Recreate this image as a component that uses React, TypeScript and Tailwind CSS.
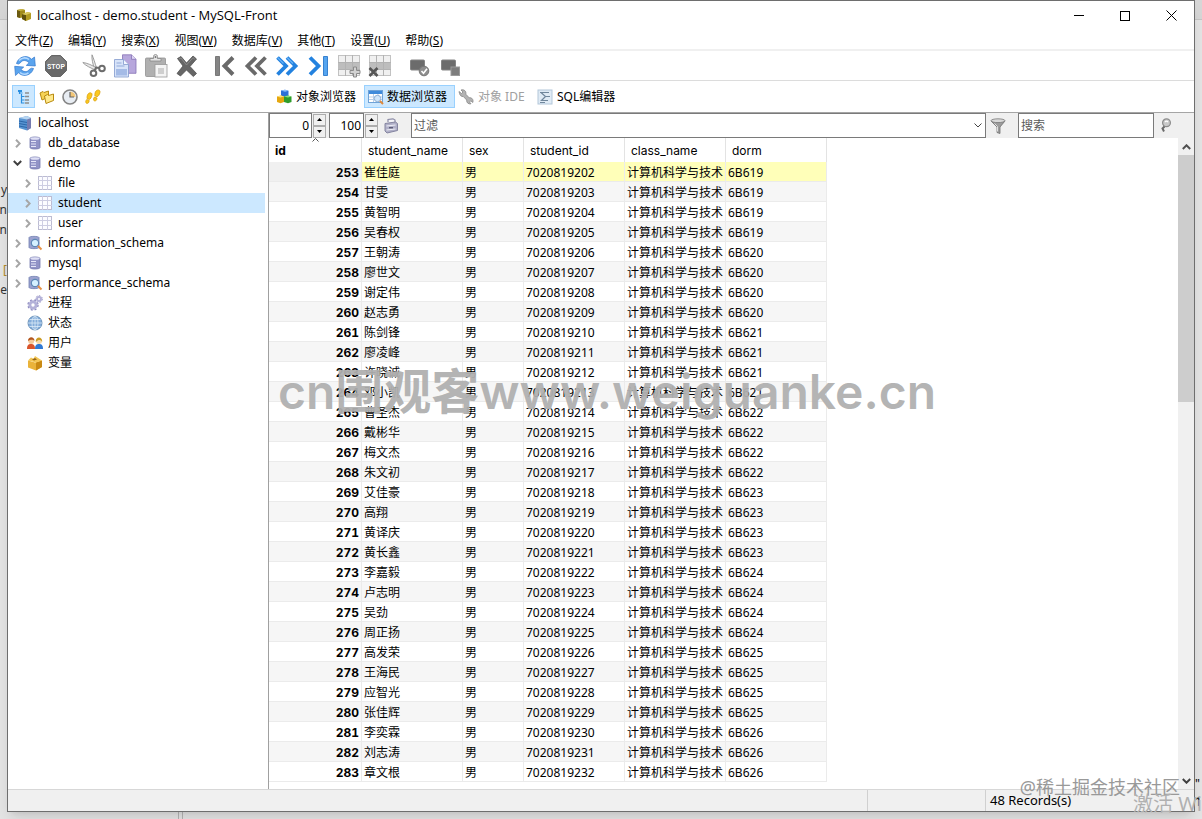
import React, { useState } from 'react';

const MENUS = [
    ['文件', 'Z'],
    ['编辑', 'Y'],
    ['搜索', 'X'],
    ['视图', 'W'],
    ['数据库', 'V'],
    ['其他', 'T'],
    ['设置', 'U'],
    ['帮助', 'S'],
];

const NAMES = [
    '崔佳庭', '甘雯', '黄智明', '吴春权', '王朝涛', '廖世文', '谢定伟', '赵志勇',
    '陈剑锋', '廖凌峰', '许晓诚', '邓小凯', '曹圣杰', '戴彬华', '梅文杰', '朱文初',
    '艾佳豪', '高翔', '黄译庆', '黄长鑫', '李嘉毅', '卢志明', '吴劲', '周正扬',
    '高发荣', '王海民', '应智光', '张佳辉', '李奕霖', '刘志涛', '章文根',
];

const STUDENTS = NAMES.map((name, i) => ({
    id: 253 + i,
    name,
    sex: '男',
    studentId: String(7020819202 + i),
    className: '计算机科学与技术',
    dorm: `6B${619 + Math.floor(i / 4)}`,
}));

type IconProps = { className?: string };

/* ---------- title bar ---------- */

const AppIcon = () => (
    <svg viewBox="0 0 16 16" className="w-4 h-4">
        <path d="M1 2l5-1 3 1v7l-5 1-3-1z" fill="#a08a1c" />
        <path d="M1 2l3 1v7l-3-1z" fill="#6b5a10" />
        <path d="M1 2l5-1 3 1-5 1z" fill="#c9b545" />
        <path d="M6 6l6-2 3 1v6l-5 2-4-2z" fill="#b39c22" />
        <path d="M6 6l4 1v6l-4-2z" fill="#5f500d" />
        <path d="M6 6l6-2 3 1-5 2z" fill="#d9c860" />
    </svg>
);

/* ---------- main toolbar ---------- */

const RefreshIcon = () => (
    <svg viewBox="0 0 24 24" className="w-6 h-6">
        <g fill="#5aa4ee" stroke="#2f76cc" strokeWidth=".7" strokeLinejoin="round">
            <path d="M3.500 9.500C5 4.500 10 1.500 15 3c1.500.5 2.600 1.200 3.500 2.200L21.500 3l.8 9-9-.6 2.800-2.700C13 6 9.500 5.600 7.500 8.700L5.500 10z" />
            <path d="M20.500 14.500C19 19.500 14 22.500 9 21c-1.500-.5-2.600-1.200-3.500-2.200L2.500 21.500l-.8-9.200 9 .8-2.800 2.500c3 2.600 6.600 2.800 8.600-.3l2-1.100z" />
        </g>
        <path d="M6 6.500C8.500 3.500 13 3 16 5.500" fill="none" stroke="#b5daff" strokeWidth="1.600" />
        <path d="M7 18.500c2.500 2 6 2 8.500.3" fill="none" stroke="#b5daff" strokeWidth="1.600" />
    </svg>
);

const StopIcon = () => (
    <svg viewBox="0 0 24 24" className="w-6 h-6">
        <path d="M7.500 1.500h9l6 6v9l-6 6h-9l-6-6v-9z" fill="#686868" stroke="#666" />
        <path d="M7.700 2.200h8.600l5.500 5.800v3H2.200V8z" fill="#7d7d7d" />
        <text x="12" y="14.500" textAnchor="middle" fontFamily="Roboto, sans-serif" fontWeight="700" fontSize="7" fill="#fff">STOP</text>
    </svg>
);

const CutIcon = () => (
    <svg viewBox="0 0 24 24" className="w-6 h-6">
        <path d="M10 .8c1.500 3 3 8.500 4.500 13l-2.300.7C11 10 9.500 5 10 .8z" fill="#e9e9e9" stroke="#888" strokeWidth=".8" />
        <path d="M.8 8.500c4.200.4 9.500 2.800 14.200 5.700l-1.200 2C9 14 3.500 11.800.8 8.500z" fill="#e9e9e9" stroke="#888" strokeWidth=".8" />
        <circle cx="11.500" cy="19.200" r="2.800" fill="none" stroke="#6c6c6c" strokeWidth="2" />
        <circle cx="20" cy="14.500" r="2.800" fill="none" stroke="#6c6c6c" strokeWidth="2" />
        <path d="M12.500 16.500l1.500-3 3.500.5" fill="none" stroke="#6c6c6c" strokeWidth="1.800" />
    </svg>
);

const CopyIcon = () => (
    <svg viewBox="0 0 24 24" className="w-6 h-6">
        <path d="M9.500.8h9l4.500 4.500v14H9.500z" fill="#b7a7dc" stroke="#8672b5" strokeWidth=".8" />
        <path d="M18.500.8v4.500H23" fill="#ded5f3" stroke="#8672b5" strokeWidth=".8" />
        <path d="M1.500 5.500h9l5 5V23h-14z" fill="#d8e4f9" stroke="#8199cb" strokeWidth=".8" />
        <path d="M3 15h11v6.500H3z" fill="#8fa9de" opacity=".7" />
        <path d="M10.500 5.500v5h5" fill="#f3f7ff" stroke="#8199cb" strokeWidth=".8" />
        <path d="M3.500 9h5M3.500 12h8" stroke="#91a9d9" strokeWidth="1.200" />
    </svg>
);

const PasteIcon = () => (
    <svg viewBox="0 0 24 24" className="w-6 h-6">
        <rect x="1.500" y="4" width="20" height="18.500" rx="1" fill="#b0b0b0" stroke="#929292" strokeWidth=".8" />
        <path d="M6 7V4.500h3.500V2.500a2 2 0 0 1 4 0v2H17V7z" fill="#e4e4e4" stroke="#888" strokeWidth=".8" />
        <circle cx="11.500" cy="3" r="1" fill="#777" />
        <rect x="11" y="10.500" width="12" height="12.500" fill="#f4f4f4" stroke="#999" strokeWidth=".8" />
        <path d="M14 15h6M14 17h6M14 19h6" stroke="#aaa" />
    </svg>
);

const DeleteIcon = () => (
    <svg viewBox="0 0 24 24" className="w-6 h-6">
        <path d="M2.500 4.500L6 2.500l5.500 6.500L18 2l3.500 3-6.500 7.500 6.500 7-3.200 3-6.800-6.500L5.500 22l-3.500-2.500 6-7.500z" fill="#666" stroke="#505050" strokeWidth=".8" strokeLinejoin="round" />
        <path d="M4 5l2-1 5.500 7L18 3.700l1.800 1.500" fill="none" stroke="#8b8b8b" />
    </svg>
);

const FirstIcon = () => (
    <svg viewBox="0 0 24 24" className="w-6 h-6">
        <path d="M2.500 2.500h4v19h-4z" fill="#858585" stroke="#666" strokeWidth=".8" />
        <path d="M20 3.500L11.500 12l8.500 8.500" fill="none" stroke="#696969" strokeWidth="4" />
    </svg>
);

const PrevIcon = () => (
    <svg viewBox="0 0 24 24" className="w-6 h-6">
        <path d="M12 3.500L3.500 12l8.500 8.500M21.500 3.500L13 12l8.500 8.500" fill="none" stroke="#6a6a6a" strokeWidth="3.800" />
    </svg>
);

const NextIcon = () => (
    <svg viewBox="0 0 24 24" className="w-6 h-6">
        <path d="M2.500 3.500L11 12l-8.500 8.500M12 3.500l8.500 8.500-8.500 8.500" fill="none" stroke="#2382df" strokeWidth="3.800" />
        <path d="M2.500 3.500l6 6M12 3.500l6 6" stroke="#68b1f5" strokeWidth="1.200" />
    </svg>
);

const LastIcon = () => (
    <svg viewBox="0 0 24 24" className="w-6 h-6">
        <path d="M17.500 2.500h4v19h-4z" fill="#55a5f0" stroke="#1b6cc4" strokeWidth=".8" />
        <path d="M4 3.500l8.500 8.500L4 20.500" fill="none" stroke="#2382df" strokeWidth="3.800" />
    </svg>
);

const GridBase = () => (
    <>
        <rect x="1.500" y="1.500" width="21" height="20" fill="#f0f0f0" stroke="#c2c2c2" />
        <rect x="1" y="8" width="22" height="7" fill="#bdbdbd" />
        <path d="M8.500 1v21M15.500 1v21M1 8.500h22M1 15.500h22" stroke="#b2b2b2" />
    </>
);

const RowAddIcon = () => (
    <svg viewBox="0 0 24 24" className="w-6 h-6">
        <GridBase />
        <path d="M16.500 13h3v3.500H23v3h-3.500V23h-3v-3.500H13v-3h3.500z" fill="#d2d2d2" stroke="#8a8a8a" />
    </svg>
);

const RowDeleteIcon = () => (
    <svg viewBox="0 0 24 24" className="w-6 h-6">
        <GridBase />
        <path d="M1.500 14l8 8M9.500 14l-8 8" stroke="#555" strokeWidth="2.600" />
    </svg>
);

const CommitIcon = () => (
    <svg viewBox="0 0 24 24" className="w-6 h-6">
        <rect x="4.500" y="6" width="14" height="10" rx="1" fill="#6c6c6c" stroke="#858585" />
        <circle cx="18" cy="17" r="4.800" fill="#8e8e8e" stroke="#777" />
        <path d="M15.500 17l2 2.200 3.500-4.500" fill="none" stroke="#fff" strokeWidth="1.600" />
    </svg>
);

const RollbackIcon = () => (
    <svg viewBox="0 0 24 24" className="w-6 h-6">
        <rect x="4.500" y="6" width="14" height="10" rx="1" fill="#6c6c6c" stroke="#858585" />
        <rect x="14" y="13" width="8.500" height="8.500" fill="#7d7d7d" stroke="#9a9a9a" />
    </svg>
);

/* ---------- side bar switcher and tabs ---------- */

const NavigatorIcon = () => (
    <svg viewBox="0 0 16 16" className="w-4 h-4">
        <path d="M3.500 1v4M3.500 4h3M5.500 5v9.500M5.500 7.500h3M5.500 11h3M5.500 14h3" fill="none" stroke="#2b8fe0" strokeWidth="1.200" />
        <path d="M2 2h4" stroke="#2b8fe0" strokeWidth="2" />
        <path d="M9 4h4M9 7.500h4M9 11h4M9 14h4" stroke="#8d8d8d" strokeWidth="1.500" />
    </svg>
);

const BookmarksIcon = () => (
    <svg viewBox="0 0 16 16" className="w-4 h-4">
        <path d="M1 4l3-1.500 1 1L9.500 2v6L3 11z" fill="#f6d254" stroke="#b98b10" />
        <path d="M5.500 7l3-1.500 1 1L14.500 5v6.500L7 14.500z" fill="#ffe98c" stroke="#b98b10" />
    </svg>
);

const HistoryIcon = () => (
    <svg viewBox="0 0 16 16" className="w-4 h-4">
        <circle cx="8" cy="8" r="7" fill="#e8edf3" stroke="#858585" strokeWidth="1.600" />
        <path d="M8 8V2.500A5.500 5.500 0 0 1 13.500 8z" fill="#f3c778" />
        <path d="M8 3v5h4" fill="none" stroke="#666" strokeWidth="1.200" />
    </svg>
);

const FootstepsIcon = () => (
    <svg viewBox="0 0 16 16" className="w-4 h-4">
        <g fill="#fbc81e" stroke="#d69b0b" strokeWidth=".7">
            <path d="M3 5c1.500-2 4.500-1.500 4 1C6.500 8.500 5.500 10 4.300 10.500L2 9.500C2 7.500 2.200 6.300 3 5z" />
            <path d="M1.700 10.500l2.500 1c0 2-1.200 3.200-2.500 2.900S.3 12 1.700 10.500z" />
            <path d="M11 2c1.500-1.700 4.500-1.200 4 1.300-.5 2.500-1.700 4-2.900 4.500l-2.300-1C9.800 4.800 10 3.300 11 2z" />
            <path d="M9.500 8l2.500 1c0 2-1.200 3.200-2.500 2.900S8.100 9.500 9.500 8z" />
        </g>
    </svg>
);

const ObjectsIcon = () => (
    <svg viewBox="0 0 16 16" className="w-4 h-4">
        <path d="M5 1.500L9 .8l3.500 1v5L9 8 5 6.800z" fill="#2d70d8" />
        <path d="M5 1.500L9 .8l3.500 1L9 2.700z" fill="#8fc0ff" />
        <path d="M1 7.500l4-1 3 1V13l-3.500 1.200L1 13z" fill="#e5a70f" />
        <path d="M1 7.500l4-1 3 1-3.500 1z" fill="#ffe27a" />
        <path d="M8 7.500l4-1 3.500 1V13L12 14.300 8 13z" fill="#2f9d2b" />
        <path d="M8 7.500l4-1 3.500 1-3.500 1z" fill="#8fe07f" />
    </svg>
);

const BrowserIcon = () => (
    <svg viewBox="0 0 16 16" className="w-4 h-4">
        <rect x=".5" y="1.500" width="14" height="12" fill="#fff" stroke="#6fa3d8" />
        <path d="M1 2h13v3H1z" fill="#3f8bdb" />
        <path d="M5.500 5v8M10 5v8M1 8h13M1 10.500h13" stroke="#b9cfe8" />
        <circle cx="9.500" cy="9.500" r="3.200" fill="#cfe6fb" stroke="#8fb0d4" />
        <path d="M12 12l3 3" stroke="#e08a3c" strokeWidth="2" />
    </svg>
);

const WrenchIcon = () => (
    <svg viewBox="0 0 16 16" className="w-4 h-4">
        <path d="M1.500 4.500L1 2.500l2.500 2 1.500-1.500-2-2c3-.8 5.500 1 4.800 4.200l3.400 3.600c2.800-.5 4.500 2 3.600 4.700l-2-1.700-1.300 1.300 1.500 1.700c-2.700.6-4.700-1.200-4.300-3.800L5.300 7.500C3.500 7.800 2 6.500 1.500 4.500z" fill="#b3b3b3" stroke="#868686" strokeWidth=".8" />
    </svg>
);

const SqlIcon = () => (
    <svg viewBox="0 0 16 16" className="w-4 h-4">
        <rect x="1" y="1" width="14" height="14" fill="#e0ebf5" stroke="#b3c7da" />
        <path d="M3 3.500h9M4 3.500L8.500 7.500 4.500 11.500H11M8.500 7.500H13M3 13.500h5" fill="none" stroke="#71879c" strokeWidth="1.200" />
    </svg>
);

/* ---------- navigator tree ---------- */

const ServerIcon = () => (
    <svg viewBox="0 0 16 16" className="w-4 h-4">
        <path d="M2 3l8-2 4 2v10l-4 2.500L2 13z" fill="#5794d2" />
        <path d="M10 4l4-1v10l-4 2.500z" fill="#747bb0" />
        <path d="M2 3l8-2 4 2-4 1.500z" fill="#b8d5f1" />
        <path d="M2 6l8 1.500M2 8.500l8 1.500M2 11l8 1.500" stroke="#2b66a8" />
    </svg>
);

const DatabaseIcon = () => (
    <svg viewBox="0 0 16 16" className="w-4 h-4">
        <path d="M3 3.500C3 1.500 13 1.500 13 3.500v9c0 2-10 2-10 0z" fill="#9193c6" stroke="#7478ad" strokeWidth=".8" />
        <ellipse cx="8" cy="3.500" rx="4.600" ry="1.300" fill="#dfe0f5" />
        <path d="M4 6.500h5M4 9h5M4 11.500h5" stroke="#e6e7f8" strokeWidth="1.200" />
    </svg>
);

const SchemaIcon = () => (
    <svg viewBox="0 0 16 16" className="w-4 h-4">
        <path d="M2 2.500C2 1 12 1 12 2.500v10c0 1.500-10 1.500-10 0z" fill="#9ba2cf" stroke="#6f7db0" strokeWidth=".8" />
        <circle cx="8" cy="8" r="3.700" fill="#d4f0ff" stroke="#5d87b5" strokeWidth="1.200" />
        <path d="M11 11l3.500 3.500" stroke="#e79346" strokeWidth="2" />
    </svg>
);

const TableIcon = () => (
    <svg viewBox="0 0 16 16" className="w-4 h-4">
        <rect x="1.500" y="1.500" width="13" height="13" fill="#fcfcff" stroke="#bcbcd2" />
        <path d="M5.500 1v14M10.500 1v14M1 5.500h14M1 10.500h14" stroke="#cdcde2" />
    </svg>
);

const ProcessIcon = () => (
    <svg viewBox="0 0 16 16" className="w-4 h-4">
        <circle cx="6" cy="10" r="5" fill="none" stroke="#8d8abf" strokeWidth="1.400" strokeDasharray="2 2" />
        <circle cx="6" cy="10" r="3.200" fill="none" stroke="#b3b1d8" strokeWidth="3" />
        <circle cx="12" cy="4" r="3.300" fill="none" stroke="#8d8abf" strokeDasharray="1.500 1.500" />
        <circle cx="12" cy="4" r="2" fill="none" stroke="#b3b1d8" strokeWidth="2" />
    </svg>
);

const GlobeIcon = () => (
    <svg viewBox="0 0 16 16" className="w-4 h-4">
        <circle cx="8" cy="8" r="7" fill="#84addA" stroke="#5581ad" strokeWidth=".8" />
        <ellipse cx="8" cy="8" rx="3" ry="7" fill="none" stroke="#dcebf8" strokeWidth=".8" />
        <path d="M1 8h14M2.500 4.500h11M2.500 11.500h11M8 1v14" stroke="#dcebf8" strokeWidth=".8" />
    </svg>
);

const UsersIcon = () => (
    <svg viewBox="0 0 16 16" className="w-4 h-4">
        <path d="M0 14c0-4 1.500-5 4-5s4 1 4 5z" fill="#d9542b" />
        <circle cx="4.200" cy="6" r="3" fill="#f5c99a" />
        <path d="M1 6c0-5 6.500-5 6.500 0C6.500 4.500 4 4 1 6z" fill="#b3561e" />
        <path d="M8 14c0-4 1.500-5 4-5s4 1 4 5z" fill="#3079d3" />
        <circle cx="12" cy="6" r="3" fill="#f8d9a8" />
        <path d="M8.700 7c-.5-6 7-6 6.500 0-1-2.500-3.500-3-6.500 0z" fill="#c99a23" />
    </svg>
);

const VariableIcon = () => (
    <svg viewBox="0 0 16 16" className="w-4 h-4">
        <path d="M1 5.500L8 7.500l7-2V12l-6 3.500L1 12.500z" fill="#eab33a" />
        <path d="M9 7.500l6-2V12l-6 3.500z" fill="#c98a14" />
        <path d="M1 5.500L4 2.500l2.500 1.200L8 1l7 4.500-6 2z" fill="#f3c655" />
        <path d="M5 4.500l3-1.500 2 1.500-3 1z" fill="#946515" />
    </svg>
);

/* ---------- filter bar ---------- */

const LimitIcon = () => (
    <svg viewBox="0 0 16 16" className="w-4 h-4">
        <path d="M5 4V1.500l5-.7 2 1.200V5" fill="#f4f4f8" stroke="#8a8aa5" strokeWidth="1.200" />
        <path d="M2 5.500L12.500 4l2 1.500v7L4 15l-2-2z" fill="#b0b0c8" stroke="#8585a0" />
        <path d="M3.500 8l9-1M3.500 12l9-1" stroke="#eeeef6" strokeWidth="1.200" />
        <path d="M6 9.700h4" stroke="#5d5d78" strokeWidth="1.400" />
    </svg>
);

const FunnelIcon = () => (
    <svg viewBox="0 0 16 16" className="w-4 h-4">
        <path d="M1 3l6 6v5.500l3 1V9l5-6z" fill="#9c9c9c" stroke="#6e6e6e" strokeWidth=".8" />
        <ellipse cx="8" cy="2.700" rx="7" ry="1.900" fill="#d9d9d9" stroke="#777" strokeWidth=".8" />
        <path d="M4.500 5.500l3 3v5" fill="none" stroke="#e0e0e0" />
    </svg>
);

const FindIcon = () => (
    <svg viewBox="0 0 16 16" className="w-4 h-4">
        <circle cx="8.500" cy="4.800" r="3.900" fill="#c9c9c9" stroke="#8b8b8b" strokeWidth="1.200" />
        <path d="M6.500 8.500L4.500 10.500l1.500 3" fill="none" stroke="#6b6b6b" strokeWidth="2" />
        <path d="M7 4c1-1.200 2-1.200 3 0" fill="none" stroke="#fff" strokeWidth="1.200" />
    </svg>
);

const CHEVRONS = {
    right: { box: 'h-[9px] w-[6px]', view: '0 0 6 9', d: 'M1 .8l3.700 3.700L1 8.200', color: '#a6a6a6' },
    down: { box: 'h-[6px] w-[9px]', view: '0 0 9 6', d: 'M.8 1l3.700 3.700L8.200 1', color: '#404040' },
    up: { box: 'h-[6px] w-[9px]', view: '0 0 9 6', d: 'M.8 5l3.700-3.700L8.200 5', color: '#505050' },
};

const Chevron = ({ dir }: { dir: keyof typeof CHEVRONS }) => {
    const c = CHEVRONS[dir];
    return (
        <svg viewBox={c.view} className={c.box}>
            <path d={c.d} fill="none" stroke={c.color} strokeWidth="2" />
        </svg>
    );
};

const TOOL_GROUPS = [
    [
        { label: '刷新', icon: <RefreshIcon /> },
        { label: '停止', icon: <StopIcon /> },
    ],
    [
        { label: '剪切', icon: <CutIcon /> },
        { label: '复制', icon: <CopyIcon /> },
        { label: '粘贴', icon: <PasteIcon /> },
        { label: '删除', icon: <DeleteIcon /> },
    ],
    [
        { label: '第一条', icon: <FirstIcon /> },
        { label: '上一页', icon: <PrevIcon /> },
        { label: '下一页', icon: <NextIcon /> },
        { label: '最后一条', icon: <LastIcon /> },
        { label: '插入记录', icon: <RowAddIcon /> },
        { label: '删除记录', icon: <RowDeleteIcon /> },
    ],
    [
        { label: '提交', icon: <CommitIcon /> },
        { label: '回滚', icon: <RollbackIcon /> },
    ],
];

interface TreeNode {
    label: string;
    icon: React.ReactNode;
    level: number;
    state?: 'open' | 'closed';
}

const TREE: TreeNode[] = [
    { label: 'localhost', icon: <ServerIcon />, level: 0 },
    { label: 'db_database', icon: <DatabaseIcon />, level: 1, state: 'closed' },
    { label: 'demo', icon: <DatabaseIcon />, level: 1, state: 'open' },
    { label: 'file', icon: <TableIcon />, level: 2, state: 'closed' },
    { label: 'student', icon: <TableIcon />, level: 2, state: 'closed' },
    { label: 'user', icon: <TableIcon />, level: 2, state: 'closed' },
    { label: 'information_schema', icon: <SchemaIcon />, level: 1, state: 'closed' },
    { label: 'mysql', icon: <DatabaseIcon />, level: 1, state: 'closed' },
    { label: 'performance_schema', icon: <SchemaIcon />, level: 1, state: 'closed' },
    { label: '进程', icon: <ProcessIcon />, level: 1 },
    { label: '状态', icon: <GlobeIcon />, level: 1 },
    { label: '用户', icon: <UsersIcon />, level: 1 },
    { label: '变量', icon: <VariableIcon />, level: 1 },
];

const INDENT = ['pl-0', 'pl-1', 'pl-[14px]'];

const TitleBar = () => (
    <header className="flex h-[29px] shrink-0 items-center pl-2">
        <AppIcon />
        <h1 className="flex-1 pl-[5px] font-['Open_Sans',sans-serif] text-[13px]">localhost - demo.student - MySQL-Front</h1>
        <button aria-label="最小化" className="flex h-full w-[46px] items-center justify-center">
            <span className="h-px w-[10px] bg-black" />
        </button>
        <button aria-label="最大化" className="flex h-full w-[46px] items-center justify-center">
            <span className="h-[10px] w-[10px] border border-black" />
        </button>
        <button aria-label="关闭" className="flex h-full w-[46px] items-center justify-center">
            <svg viewBox="0 0 11 11" className="h-[11px] w-[11px]">
                <path d="M.5.5l10 10M10.500.5l-10 10" stroke="#000" />
            </svg>
        </button>
    </header>
);

const SpinBox = ({ label, initial, className }: { label: string; initial: number } & IconProps) => {
    const [value, setValue] = useState(initial);
    return (
        <div className="flex h-[25px] items-center gap-px">
            <input
                aria-label={label}
                value={value}
                onChange={e => setValue(Number(e.target.value) || 0)}
                className={`h-full border border-[#7a7a7a] bg-white pr-[2px] text-right text-[12px] outline-none ${className}`}
            />
            <div className="flex flex-col">
                <button aria-label={`${label} +`} onClick={() => setValue(value + 1)} className="flex h-[12px] w-[13px] items-center justify-center border border-[#adadad] bg-[#f0f0f0]">
                    <svg viewBox="0 0 5 3" className="h-[3px] w-[5px]"><path d="M0 3l2.500-3L5 3z" /></svg>
                </button>
                <button aria-label={`${label} -`} onClick={() => setValue(Math.max(0, value - 1))} className="flex h-[12px] w-[13px] items-center justify-center border border-[#adadad] bg-[#f0f0f0]">
                    <svg viewBox="0 0 5 3" className="h-[3px] w-[5px]"><path d="M0 0l2.500 3L5 0z" /></svg>
                </button>
            </div>
        </div>
    );
};

const FilterBar = () => (
    <div className="flex h-[25px] shrink-0 items-center bg-[#f0f0f0]">
        <SpinBox label="偏移" initial={0} className="w-[43px]" />
        <div className="w-[3px]" />
        <SpinBox label="限制" initial={100} className="w-[35px]" />
        <button aria-label="应用限制" className="ml-[5px] mr-3"><LimitIcon /></button>
        <div className="relative h-full flex-1">
            <select aria-label="过滤" className="block h-full w-full appearance-none border border-[#7a7a7a] bg-white px-[2px] text-[12px] leading-[22px] text-[#5a5a5a] outline-none">
                <option>过滤</option>
            </select>
            <svg viewBox="0 0 8 5" className="pointer-events-none absolute right-1 top-[10px] h-[5px] w-[8px]">
                <path d="M.5.5L4 4 7.500.5" fill="none" stroke="#444" />
            </svg>
        </div>
        <button aria-label="启用过滤" className="ml-1 mr-3"><FunnelIcon /></button>
        <input aria-label="搜索" placeholder="搜索" className="h-full w-[136px] border border-[#7a7a7a] bg-white px-[2px] text-[12px] outline-none placeholder:text-[#5a5a5a]" />
        <button aria-label="查找" className="ml-1 mr-5"><FindIcon /></button>
    </div>
);

const COLUMNS = [
    { label: 'id', className: 'w-[93px] font-bold' },
    { label: 'student_name', className: 'w-[101px] font-normal' },
    { label: 'sex', className: 'w-[61px] font-normal' },
    { label: 'student_id', className: 'w-[101px] font-normal' },
    { label: 'class_name', className: 'w-[101px] font-normal' },
    { label: 'dorm', className: 'w-[101px] font-normal' },
];

const DataGrid = () => (
    <table className="w-[558px] table-fixed border-separate border-spacing-0 text-left text-[12px]">
        <thead>
            <tr className="h-6">
                {COLUMNS.map(c => (
                    <th key={c.label} scope="col" className={`relative border-r border-[#e3e3e3] p-0 pl-[6px] pt-[2px] font-[Inter] leading-5 ${c.className}`}>
                        {c.label}
                        {c.label === 'id' && (
                            <svg viewBox="0 0 7 4" className="absolute left-[43px] top-0 h-[4px] w-[7px]">
                                <path d="M.5 3.500l3-3 3 3" fill="none" stroke="#555" />
                            </svg>
                        )}
                    </th>
                ))}
            </tr>
        </thead>
        <tbody>
            {STUDENTS.map((s, i) => {
                const cell = 'h-5 border-b border-r border-[#ebebeb] p-0 pt-[2px] pl-[2px] leading-[17px] whitespace-nowrap';
                const bg = i === 0 ? 'bg-[#ffffb9]' : i % 2 ? 'bg-[#f6f6f6]' : 'bg-white';
                return (
                    <tr key={s.id} className={bg}>
                        <td className={`${cell} pr-[2px] text-right font-[Inter] font-bold tabular-nums ${i === 0 ? 'bg-[#f0f0f0]' : ''}`}>{s.id}</td>
                        <td className={cell}>{s.name}</td>
                        <td className={cell}>{s.sex}</td>
                        <td className={cell}>{s.studentId}</td>
                        <td className={cell}>{s.className}</td>
                        <td className={cell}>{s.dorm}</td>
                    </tr>
                );
            })}
        </tbody>
    </table>
);

export default function App() {
    const [selected, setSelected] = useState('student');

    return (
        <div className="relative h-screen overflow-hidden bg-[#e4e4e4] px-[7px] pb-[7px] font-['Noto_Sans','Noto_Sans_CJK_SC',sans-serif] text-black">
            {/* window behind */}
            <div className="absolute inset-x-0 top-0 h-5 border-b border-[#c4c4c4] bg-[#d6d6d6]" />
            <div className="absolute bottom-0 left-[178px] h-[7px] w-[5px] border-x border-[#b4b4b4]" />
            <div className="absolute left-0 top-[180px] flex w-[7px] flex-col items-end overflow-hidden text-[12px] leading-5 text-[#333]">
                <span>y</span>
                <span>n</span>
                <span>n</span>
                <span />
                <span className="mt-5 text-[#b08a28]">[</span>
                <span>e</span>
            </div>
            <div className="absolute right-0 top-[775px] flex w-[7px] flex-col text-[12px] leading-[18px]">
                <span>"</span>
                <span>1</span>
            </div>

            <div className="relative flex h-full flex-col border border-[#6e6e6e] bg-white shadow-lg">
                <TitleBar />

                <nav className="flex h-[21px] shrink-0 items-end gap-[15px] border-b-2 border-[#f0f0f0] pl-[7px] text-[12px]">
                    {MENUS.map(([text, key]) => (
                        <button key={key} className="leading-[17px]">
                            {text}(<u>{key}</u>)
                        </button>
                    ))}
                </nav>

                <div className="flex h-[30px] shrink-0 items-center gap-[7px] border-b border-[#dcdcdc] pl-px">
                    {TOOL_GROUPS.map((group, i) => (
                        <div key={i} className="flex">
                            {group.map(t => (
                                <button key={t.label} aria-label={t.label} className="flex w-[31px] justify-center">{t.icon}</button>
                            ))}
                        </div>
                    ))}
                </div>

                <div className="flex h-8 shrink-0 items-center border-b border-[#a5a5a5] text-[12px]">
                    <div className="flex w-[264px] items-center pl-1">
                        <button aria-label="导航" className="flex h-[23px] w-[23px] items-center justify-center border border-[#99d1ff] bg-[#cce8ff]"><NavigatorIcon /></button>
                        <button aria-label="书签" className="flex w-[23px] justify-center"><BookmarksIcon /></button>
                        <button aria-label="历史" className="flex w-[23px] justify-center"><HistoryIcon /></button>
                        <button aria-label="跟踪" className="flex w-[23px] justify-center"><FootstepsIcon /></button>
                    </div>
                    <button className="flex h-[23px] w-[92px] items-center gap-1 pl-1"><ObjectsIcon />对象浏览器</button>
                    <button className="flex h-[23px] w-[91px] items-center gap-[3px] border border-[#99d1ff] bg-[#cce8ff] pl-[3px]"><BrowserIcon />数据浏览器</button>
                    <button disabled className="flex h-[23px] w-[79px] items-center gap-1 pl-[3px] text-[#a0a0a0]"><WrenchIcon />对象 IDE</button>
                    <button className="flex h-[23px] items-center gap-1 pl-[3px]"><SqlIcon />SQL编辑器</button>
                </div>

                <div className="flex min-h-0 flex-1">
                    <aside className="w-[261px] shrink-0 border-r border-[#a0a0a0] pr-[3px]">
                        <ul className="text-[12px]">
                            {TREE.map(n => (
                                <li key={n.label}>
                                    <button
                                        onClick={() => setSelected(n.label)}
                                        className={`flex h-5 w-full items-center ${INDENT[n.level]} ${n.label === selected ? 'bg-[#cce8ff]' : ''}`}
                                    >
                                        {n.level > 0 && (
                                            <span className="flex w-[15px] shrink-0 justify-center pr-1">
                                                {n.state === 'closed' && <Chevron dir="right" />}
                                                {n.state === 'open' && <Chevron dir="down" />}
                                            </span>
                                        )}
                                        <span className={n.level === 0 ? 'ml-[9px] mr-[5px]' : 'mr-[5px]'}>{n.icon}</span>
                                        <span className="leading-5">{n.label}</span>
                                    </button>
                                </li>
                            ))}
                        </ul>
                    </aside>

                    <main className="flex min-w-0 flex-1 flex-col">
                        <FilterBar />
                        <div className="flex min-h-0 flex-1">
                            <div className="min-w-0 flex-1 overflow-hidden">
                                <DataGrid />
                            </div>
                            <div className="flex w-4 shrink-0 flex-col items-center bg-[#f0f0f0]">
                                <button aria-label="向上滚动" className="flex h-[17px] items-center"><Chevron dir="up" /></button>
                                <div className="w-full flex-1">
                                    <div className="h-[40%] w-full bg-[#cdcdcd]" />
                                </div>
                                <button aria-label="向下滚动" className="flex h-[17px] items-center"><Chevron dir="down" /></button>
                            </div>
                        </div>
                    </main>
                </div>

                <footer className="flex h-[22px] shrink-0 border-t border-[#d7d7d7] bg-[#f0f0f0] text-[13px] leading-[21px]">
                    <span className="flex-1" />
                    <span className="w-[118px] border-l border-[#d0d0d0]" />
                    <span className="w-[209px] border-l border-[#d0d0d0] pl-1">48 Records(s)</span>
                </footer>
            </div>

            {/* watermarks */}
            <p className="pointer-events-none absolute left-[278px] top-[362px] whitespace-nowrap font-[Inter,'Noto_Sans_CJK_SC',sans-serif] text-[48px] font-semibold leading-[60px] text-[#b0b0b0]/95">
                cn围观客www.weiguanke.cn
            </p>
            <p className="pointer-events-none absolute bottom-[20px] right-[22px] whitespace-nowrap text-[18px] leading-6 text-[#999]">@稀土掘金技术社区</p>
            <p className="pointer-events-none absolute bottom-[3px] right-0 whitespace-nowrap text-[20px] leading-6 text-[#b0b0b0]">激活 Wi</p>
        </div>
    );
}
